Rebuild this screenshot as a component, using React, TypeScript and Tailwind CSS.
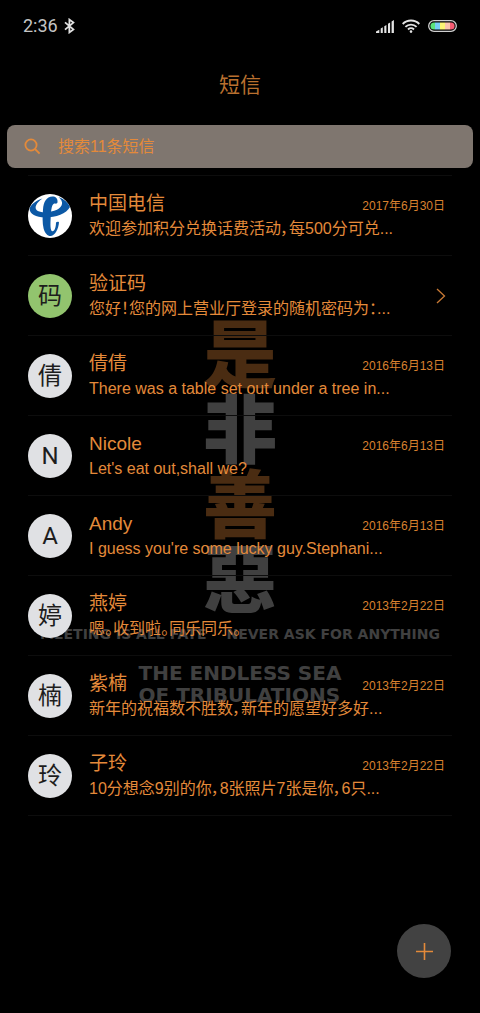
import { useState } from 'react';

type Message = {
  id: number;
  name: string;
  preview: string;
  date?: string;
  avatar?: string;
  avatarClass?: string;
};

const messages: Message[] = [
  { id: 1, name: '中国电信', preview: '欢迎参加积分兑换话费活动，每500分可兑...', date: '2017年6月30日' },
  { id: 2, name: '验证码', preview: '您好！您的网上营业厅登录的随机密码为：...', avatar: '码', avatarClass: 'bg-[#92c46e]' },
  { id: 3, name: '倩倩', preview: 'There was a table set out under a tree in...', date: '2016年6月13日', avatar: '倩' },
  { id: 4, name: 'Nicole', preview: "Let's eat out,shall we?", date: '2016年6月13日', avatar: 'N' },
  { id: 5, name: 'Andy', preview: "I guess you're some lucky guy.Stephani...", date: '2016年6月13日', avatar: 'A' },
  { id: 6, name: '燕婷', preview: '嗯。收到啦。同乐同乐。', date: '2013年2月22日', avatar: '婷' },
  { id: 7, name: '紫楠', preview: '新年的祝福数不胜数，新年的愿望好多好...', date: '2013年2月22日', avatar: '楠' },
  { id: 8, name: '子玲', preview: '10分想念9别的你，8张照片7张是你，6只...', date: '2013年2月22日', avatar: '玲' },
];

function StatusBar() {
  return (
    <div className="flex h-[52px] items-center justify-between pl-[23px] pr-[23px] text-[#c4c4c4]">
      <div className="flex items-center gap-1.5">
        <span className="font-['Roboto',sans-serif] text-lg">2:36</span>
        <svg width="11" height="16" viewBox="0 0 11 16" fill="none" stroke="#e0e0e0" strokeWidth="1.8">
          <path d="M1 4.4 9.4 11.4 5.4 14.4V1.6l4 3L1 11.6" />
        </svg>
      </div>
      <div className="flex items-center gap-2">
        <svg width="18" height="13" viewBox="0 0 18 13" fill="#e4e4e4">
          <path d="M0 13v-1.4L3.3 9.8V13zM4.7 13V8.6l2.1-1.3V13zM8.3 13V6.2l2.1-1.3V13zM12 13V3.8l2.1-1.3V13zM15.6 13V1.4L17.9 0V13z" />
        </svg>
        <svg width="18" height="14" viewBox="0 0 18 14" fill="none" stroke="#e4e4e4" strokeWidth="1.9">
          <path d="M.7 5a11.7 11.7 0 0 1 16.6 0M3.4 7.9a8 8 0 0 1 11.2 0M6 10.5a4.3 4.3 0 0 1 6 0" />
          <circle cx="9" cy="12.6" r="1.3" fill="#e4e4e4" stroke="none" />
        </svg>
        <svg width="29" height="12" viewBox="0 0 29 12">
          <rect x=".7" y=".7" width="27.6" height="10.6" rx="5.3" fill="none" stroke="#cfcfcf" strokeWidth="1.3" />
          <clipPath id="charge">
            <rect x="2.4" y="2.4" width="24.2" height="7.2" rx="3.6" />
          </clipPath>
          <g clipPath="url(#charge)">
            <rect x="2" y="2" width="5" height="8" fill="#5be37a" />
            <rect x="7" y="2" width="5" height="8" fill="#76cdf5" />
            <rect x="12" y="2" width="5" height="8" fill="#fbf473" />
            <rect x="17" y="2" width="5" height="8" fill="#fbc3ae" />
            <rect x="22" y="2" width="5" height="8" fill="#f75c73" />
          </g>
        </svg>
      </div>
    </div>
  );
}

function TelecomLogo() {
  return (
    <svg className="size-11 shrink-0" viewBox="0 0 44 44">
      <circle cx="22" cy="22" r="22" fill="#fff" />
      {/* swoosh */}
      <path
        fill="#0b58a5"
        d="M14.5 4.6C8 6.5 3 10.5 1.6 14.5C1.4 20 8 23.5 17 23.5C28 23.5 38.5 19.5 42 13C40 8.5 36 5 30.5 3C36 7.5 35 12.5 29 15.7C23 18.5 13 19.3 9 16.5C5.8 13.8 8.5 8.5 14.5 4.6Z"
      />
      {/* stem */}
      <path
        fill="#0b58a5"
        d="M29.5 8.5C30 4.5 27.5 2.6 24.5 2.6C18.5 2.8 15.5 8 15 15.5C14.5 22 14.3 29.5 15.6 34.5C17 39.8 20 42.4 23 42C27 41.3 30.5 35 31 28.2C30 27.5 28.8 27.8 28 28.5C28 33 26.6 37.3 24.6 37.3C22 37 22.4 30 22.7 23.5C23 17 23.5 11.5 25.5 10C27 9 28.5 10.5 29.5 8.5Z"
      />
    </svg>
  );
}

function Avatar({ message }: { message: Message }) {
  if (!message.avatar) return <TelecomLogo />;
  return (
    <span
      className={`flex size-11 shrink-0 items-center justify-center rounded-full font-['Roboto','Noto_Sans_CJK_SC',sans-serif] text-2xl text-[#1d1d1d] ${message.avatarClass ?? 'bg-[#e0e1e4]'}`}
    >
      {message.avatar}
    </span>
  );
}

function Wallpaper() {
  return (
    <div aria-hidden="true" className="pointer-events-none absolute inset-x-0 top-[312px] z-0 flex flex-col items-center font-['DejaVu_Sans',sans-serif] font-bold text-[#404040]">
      <div className="flex flex-col items-center font-['Noto_Sans_CJK_SC',sans-serif] text-[74px] font-black leading-[75px]">
        <span className="text-[#4a2c12]">是</span>
        <span>非</span>
        <span className="text-[#4a2c12]">善</span>
        <span>惡</span>
      </div>
      <div className="mt-3 flex gap-5 whitespace-nowrap text-sm">
        <span>MEETING IS ALL FATE</span>
        <span>NEVER ASK FOR ANYTHING</span>
      </div>
      <div className="mt-[18px] text-xl leading-[22px]">
        <div>THE ENDLESS SEA</div>
        <div>OF TRIBULATIONS</div>
      </div>
    </div>
  );
}

export default function App() {
  const [query, setQuery] = useState('');

  const filtered = messages.filter(m => (m.name + m.preview).includes(query));

  return (
    <div className="relative min-h-screen bg-black font-['Liberation_Sans','Noto_Sans_CJK_SC',sans-serif] text-[#e48a3a]">
      <Wallpaper />

      <div className="relative z-10">
        <StatusBar />

        <h1 className="flex h-[73px] items-center justify-center pb-2 text-[21px] text-[#b9702f]">短信</h1>

        {/* Search */}
        <label className="mx-[7px] flex h-[43px] items-center gap-[17px] rounded-lg bg-[#7f766f] pl-[17px] pr-4">
          <svg width="17" height="17" viewBox="0 0 17 17" fill="none" stroke="currentColor" strokeWidth="1.8">
            <circle cx="7" cy="7" r="5.6" />
            <path d="m11 11 4.6 4.6" />
          </svg>
          <input
            type="text"
            aria-label="搜索短信"
            placeholder="搜索11条短信"
            value={query}
            onChange={e => setQuery(e.target.value)}
            className="min-w-0 flex-1 bg-transparent text-base outline-none placeholder:text-[#e48a3a]"
          />
        </label>

        {/* Conversations */}
        <ul className="mx-7 mt-[7px] border-t border-[#0d0d0d]">
          {filtered.map(message => (
            <li key={message.id} className="border-b border-[#0d0d0d]">
              <a href="#" className="flex h-[79px] items-center gap-[17px]">
                <Avatar message={message} />
                <div className="min-w-0 flex-1">
                  <div className="flex items-center justify-between pr-[7px]">
                    <span className="text-[19px] leading-[26px]">{message.name}</span>
                    {message.date && <span className="pt-1 text-xs text-[#d9812f]">{message.date}</span>}
                  </div>
                  <p className="truncate text-base leading-6 [font-feature-settings:'palt']">{message.preview}</p>
                </div>
                {!message.date && (
                  <svg className="mr-1.5 shrink-0" width="10" height="16" viewBox="0 0 10 16" fill="none" stroke="#c97a35" strokeWidth="1.3">
                    <path d="m1 1 7.5 7L1 15" />
                  </svg>
                )}
              </a>
            </li>
          ))}
        </ul>
      </div>

      <button
        type="button"
        aria-label="新建短信"
        className="fixed bottom-[35px] right-[29px] z-20 flex size-[54px] items-center justify-center rounded-full bg-[#424242]"
      >
        <svg width="17" height="17" viewBox="0 0 17 17" stroke="#e48a3a" strokeWidth="1.6">
          <path d="M8.5 0v17M0 8.5h17" />
        </svg>
      </button>
    </div>
  );
}
